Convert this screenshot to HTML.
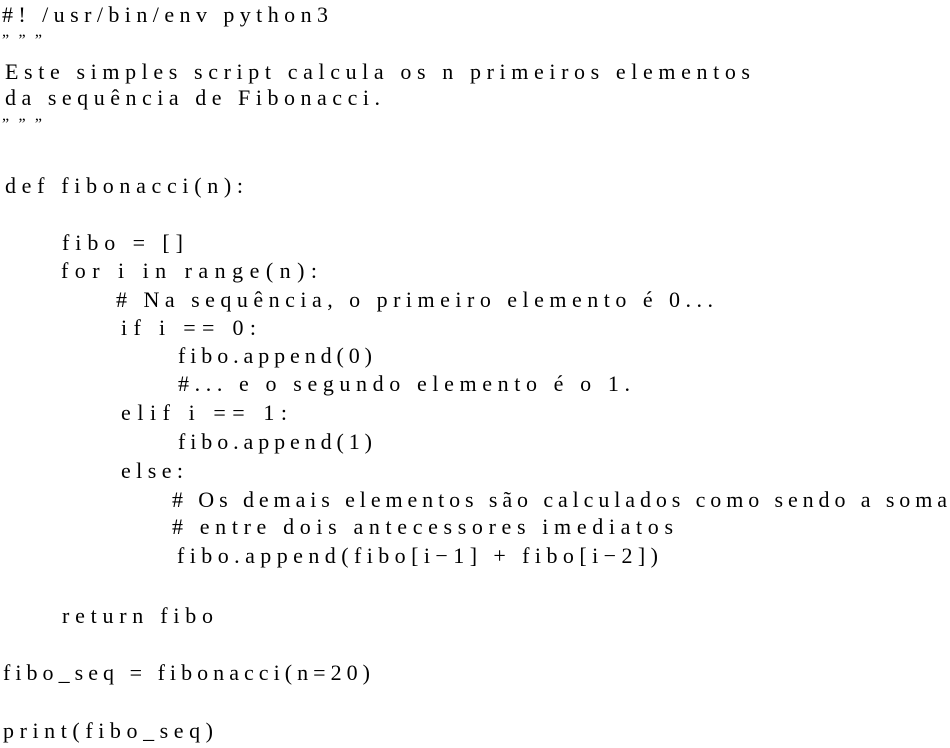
<!DOCTYPE html>
<html><head><meta charset="utf-8"><style>
html,body{margin:0;padding:0;background:#fff;width:950px;height:748px;overflow:hidden}
svg{display:block}
text{font-family:"Liberation Serif",serif;font-size:22px;fill:#000}
</style></head><body>
<svg width="950" height="748" xmlns="http://www.w3.org/2000/svg">
<text x="2" y="22" textLength="326" lengthAdjust="spacing">#! /usr/bin/env python3</text>
<text x="2" y="45" style="font-size:16px" textLength="40" lengthAdjust="spacing">”””</text>
<text x="5" y="79" textLength="745" lengthAdjust="spacing">Este simples script calcula os n primeiros elementos</text>
<text x="5" y="105" textLength="375" lengthAdjust="spacing">da sequência de Fibonacci.</text>
<text x="2" y="129" style="font-size:16px" textLength="40" lengthAdjust="spacing">”””</text>
<text x="5" y="193" textLength="238" lengthAdjust="spacing">def fibonacci(n):</text>
<text x="62" y="250" textLength="121" lengthAdjust="spacing">fibo = []</text>
<text x="61" y="278" textLength="256" lengthAdjust="spacing">for i in range(n):</text>
<text x="116" y="307" textLength="597" lengthAdjust="spacing"># Na sequência, o primeiro elemento é 0...</text>
<text x="121" y="335" textLength="135" lengthAdjust="spacing">if i == 0:</text>
<text x="178" y="363" textLength="194" lengthAdjust="spacing">fibo.append(0)</text>
<text x="178" y="391" textLength="452" lengthAdjust="spacing">#... e o segundo elemento é o 1.</text>
<text x="121" y="420" textLength="166" lengthAdjust="spacing">elif i == 1:</text>
<text x="178" y="449" textLength="194" lengthAdjust="spacing">fibo.append(1)</text>
<text x="121" y="478" textLength="62" lengthAdjust="spacing">else:</text>
<text x="172" y="507" textLength="775" lengthAdjust="spacing"># Os demais elementos são calculados como sendo a soma</text>
<text x="172" y="534" textLength="501" lengthAdjust="spacing"># entre dois antecessores imediatos</text>
<text x="177" y="563" textLength="481" lengthAdjust="spacing">fibo.append(fibo[i−1] + fibo[i−2])</text>
<text x="62" y="623" textLength="151" lengthAdjust="spacing">return fibo</text>
<text x="3" y="680" textLength="367" lengthAdjust="spacing">fibo_seq = fibonacci(n=20)</text>
<text x="3" y="738" textLength="210" lengthAdjust="spacing">print(fibo_seq)</text>
</svg>
</body></html>
